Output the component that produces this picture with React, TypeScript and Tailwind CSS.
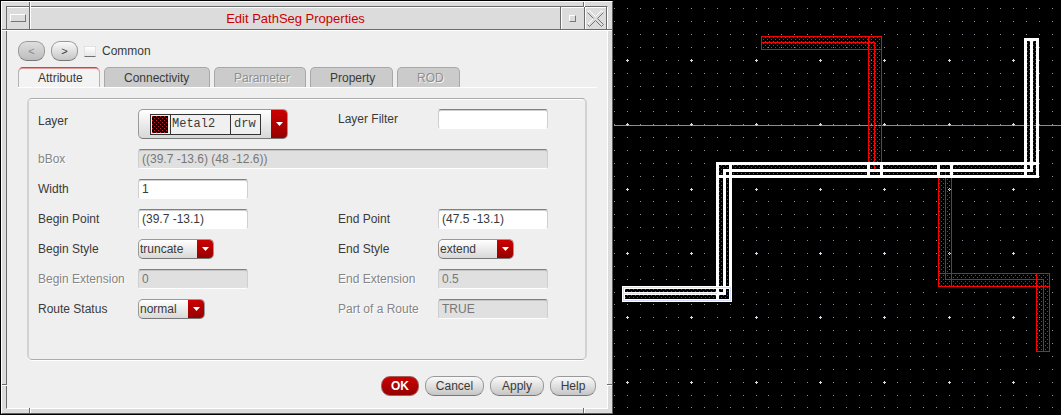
import type { ReactNode } from 'react';

const GRID = 12.87;
const ORIGIN_X = 14.4;
const ORIGIN_Y = 60.4;

function buildGrid() {
  let dots = '';
  let crosses = '';
  for (let i = -1; i < 160; i++) {
    for (let j = -4; j < 90; j++) {
      const x = Math.floor(ORIGIN_X + i * GRID);
      const y = Math.floor(ORIGIN_Y + j * GRID);
      if (i % 5 === 0 && j % 5 === 0) {
        crosses += `M${x - 1} ${y}h3v1h-3zM${x} ${y - 1}h1v3h-1z`;
      } else {
        dots += `M${x} ${y}h1v1h-1z`;
      }
    }
  }
  return { dots, crosses };
}

const grid = buildGrid();

function LayoutCanvas() {
  return (
    <section aria-label="Layout canvas" className="relative min-w-0 overflow-hidden bg-black">
      <svg className="absolute inset-0 h-full w-full" shapeRendering="crispEdges" aria-hidden="true">
        <defs>
          <pattern id="stipple" width="4" height="4" patternUnits="userSpaceOnUse">
            <path d="M1 1h1v1h-1zM3 3h1v1h-1z" fill="#d01c24" />
          </pattern>
        </defs>
        <path d={grid.dots} fill="#8c8c9e" />
        <rect x="1" y="125" width="100%" height="1" fill="#8c8c9e" />
        <path d={grid.crosses} fill="#d6d6e4" />
        <g transform="translate(-613 0)">
          <g fill="url(#stipple)">
            <path d="M761 36H882V177H868V50H761z" />
            <path d="M938 163H952V273H1050V352H1036V287H938z" />
            <path d="M717 163H1025V39H1038V177H731V301H623V287H717z" />
          </g>
          <g fill="none" stroke="#ff0000">
            <path d="M761.5 36.5H881.5V49.5H761.5zM868.5 36.5H881.5V163.5H868.5zM761.5 42.5H874.5V169" />
            <path d="M938.5 177V286.5H1049.5V273.5H938.5M951.5 177V286.5M1036.5 273.5H1049.5V351.5H1036.5zM945.5 172V279.5H1043.5V351" />
          </g>
          <g fill="none" stroke="#ffffff" strokeWidth="3">
            <path d="M717.5 163.5H1037.5V176.5H717.5z" />
            <path d="M1025.5 39.5H1037.5V176.5H1025.5z" />
            <path d="M717.5 163.5H730.5V300.5H717.5z" />
            <path d="M623.5 287.5H730.5V300.5H623.5z" />
            <path d="M1031.5 39V170.5H724.5V293.5H623" />
            <path d="M868.5 163V177M881.5 163V177M938.5 163V177M951.5 163V177" />
          </g>
          <path d="M623.5 287.5H730.5V300.5H623.5zM624 293.5H717" fill="none" stroke="#d3dcf8" />
        </g>
      </svg>
    </section>
  );
}

function TitleBar() {
  return (
    <header className="flex h-[23px] border-b border-[#6b6b6b] bg-[#dcdcdc] shadow-[inset_0_1px_0_#fff]">
      <button type="button" aria-label="Window menu" className="flex w-[23px] items-center justify-center border-r border-[#6b6b6b]">
        <span className="h-2 w-4 border border-t-white border-r-[#777] border-b-[#777] border-l-white" />
      </button>
      <h1 className="flex-1 border-l border-white pt-px text-center text-[13px] leading-[22px] text-[#cc0000]">
        Edit PathSeg Properties
      </h1>
      <button type="button" aria-label="Maximize" className="flex w-6 items-center justify-center border-l border-[#6b6b6b] shadow-[inset_1px_1px_0_#fff]">
        <span className="h-[7px] w-[7px] border border-t-white border-r-[#777] border-b-[#777] border-l-white" />
      </button>
      <button type="button" aria-label="Close" className="flex w-[23px] items-center justify-center border-x border-[#6b6b6b] shadow-[inset_1px_1px_0_#fff]">
        <svg width="17" height="17" viewBox="0 0 17 17" fill="none" aria-hidden="true">
          <path d="M.5 2.5L2.5 .5L8.5 6.5L14.5 .5L16.5 2.5M.5 14.5L6.5 8.5" stroke="#ffffff" />
          <path d="M16.5 2.5L10.5 8.5L16.5 14.5L14.5 16.5L8.5 10.5L2.5 16.5L.5 14.5M.5 2.5L6.5 8.5" stroke="#777777" />
        </svg>
      </button>
    </header>
  );
}

function FrameNotches() {
  const dark = 'absolute bg-[#6b6b6b]';
  return (
    <div aria-hidden="true" className="pointer-events-none">
      <span className={`${dark} top-0 left-[27px] h-[5px] w-px shadow-[1px_0_0_#fff]`} />
      <span className={`${dark} top-0 right-7 h-[5px] w-px shadow-[1px_0_0_#fff]`} />
      <span className={`${dark} bottom-0 left-[27px] h-[5px] w-px shadow-[1px_0_0_#fff]`} />
      <span className={`${dark} right-7 bottom-0 h-[5px] w-px shadow-[1px_0_0_#fff]`} />
      <span className={`${dark} top-[27px] left-0 h-px w-[5px] shadow-[0_1px_0_#fff]`} />
      <span className={`${dark} top-[27px] right-0 h-px w-[5px] shadow-[0_1px_0_#fff]`} />
      <span className={`${dark} bottom-7 left-0 h-px w-[5px] shadow-[0_1px_0_#fff]`} />
      <span className={`${dark} right-0 bottom-7 h-px w-[5px] shadow-[0_1px_0_#fff]`} />
    </div>
  );
}

const pill =
  'h-5 rounded-[9px] border border-[#999] border-b-[#777] bg-linear-to-b leading-[18px]';
const pillNormal = 'from-[#fafafa] to-[#c6c6c6] text-[#3a3a3a]';

function Tab({ label, width, active, disabled }: { label: string; width: string; active?: boolean; disabled?: boolean }) {
  return (
    <button
      type="button"
      role="tab"
      aria-selected={!!active}
      disabled={disabled}
      className={`h-5 rounded-t-[5px] border border-b-0 pl-[19px] text-left text-[12px] ${width} ${
        active
          ? 'border-[#b4b4b4] border-t-[#c84848] bg-[#f3f3f3] leading-[18px] text-[#3a3a3a] shadow-[inset_0_1px_0_#e59a9a]'
          : disabled
            ? 'border-[#a8a8a8] bg-[#cbcbcb] leading-5 text-[#8e8e8e] [text-shadow:1px_1px_0_#f4f4f4]'
            : 'border-[#a8a8a8] bg-[#cbcbcb] leading-5 text-[#3a3a3a]'
      }`}
    >
      {label}
    </button>
  );
}

function Label({ htmlFor, disabled, children }: { htmlFor: string; disabled?: boolean; children: ReactNode }) {
  return (
    <label
      htmlFor={htmlFor}
      className={`text-[12px] leading-5 whitespace-nowrap ${
        disabled ? 'text-[#858585] [text-shadow:1px_1px_0_#fff]' : 'text-[#3a3a3a]'
      }`}
    >
      {children}
    </label>
  );
}

function TextField({ id, value, disabled, wide }: { id: string; value?: string; disabled?: boolean; wide?: boolean }) {
  return (
    <input
      id={id}
      type="text"
      defaultValue={value}
      disabled={disabled}
      className={`h-5 w-full rounded-[3px] border border-t-[#808080] px-[3px] text-[12px] ${wide ? 'col-span-3' : 'max-w-[110px]'} ${
        disabled
          ? 'border-x-[#cfcfcf] border-b-white bg-[#e0e0e0] text-[#777] shadow-[inset_0_1px_0_#c4c4c4]'
          : 'border-x-[#cfcfcf] border-b-white bg-white text-[#3a3a3a] shadow-[inset_0_1px_0_#d0d0d0]'
      }`}
    />
  );
}

function Arrow() {
  return (
    <span className="flex w-4 items-center justify-center bg-linear-to-b from-[#cc0000] to-[#960000]">
      <svg width="7" height="4" viewBox="0 0 7 4" aria-hidden="true">
        <path d="M0 0h7L3.5 4z" fill="#fff" />
      </svg>
    </span>
  );
}

function Select({ id, value, options, width }: { id: string; value: string; options: string[]; width: string }) {
  return (
    <div className={`relative h-5 ${width}`}>
      <select
        id={id}
        defaultValue={value}
        className="block h-5 w-full appearance-none rounded-[5px] border border-[#999] border-b-[#777] bg-linear-to-b from-white to-[#d8d8d8] pr-4 pl-px text-[12px] leading-[18px] text-[#3a3a3a]"
      >
        {options.map((o) => (
          <option key={o}>{o}</option>
        ))}
      </select>
      <span className="pointer-events-none absolute inset-y-px right-px flex overflow-hidden rounded-r">
        <Arrow />
      </span>
    </div>
  );
}

function LayerSelect() {
  return (
    <div className="relative flex h-[30px] w-[150px] overflow-hidden rounded-[5px] border border-[#999] border-b-[#777] bg-linear-to-b from-white to-[#d8d8d8]">
      <div aria-hidden="true" className="flex flex-1 items-center pl-[11px]">
        <div className="flex h-[21px] w-[111px] border border-[#333] bg-[#f0f0f0] font-['Liberation_Mono',monospace] text-[12px] leading-[19px] text-[#3a3a3a]">
          <svg className="h-[19px] w-5 shrink-0 border-r border-[#333]" shapeRendering="crispEdges">
            <defs>
              <pattern id="swatch-stipple" width="4" height="4" patternUnits="userSpaceOnUse">
                <path d="M1 1h1v1h-1zM3 3h1v1h-1z" fill="#d01c24" />
              </pattern>
            </defs>
            <rect x="1" y="1" width="16" height="17" fill="#000" />
            <rect x="1" y="1" width="16" height="17" fill="url(#swatch-stipple)" />
          </svg>
          <span className="w-[60px] border-r border-[#333] pl-px">Metal2</span>
          <span className="pl-[3px]">drw</span>
        </div>
      </div>
      <Arrow />
      <select id="layer" defaultValue="Metal2 drw" className="absolute inset-0 h-full w-full opacity-0">
        <option>Metal2 drw</option>
      </select>
    </div>
  );
}

function AttributeForm() {
  return (
    <div
      role="tabpanel"
      aria-label="Attribute"
      className="mx-5 mt-2.5 rounded-[5px] border-x-2 border-y border-x-[#d2d2d2] border-y-[#acacac] pt-2.5 pr-2 pb-10 pl-[9px] shadow-[inset_0_1px_0_#fff,0_1px_0_#fff]"
    >
      <div className="grid max-w-[510px] grid-cols-[100px_minmax(0,200px)_100px_minmax(0,110px)] gap-y-2.5">
        <div className="flex pt-0.5">
          <Label htmlFor="layer">Layer</Label>
        </div>
        <LayerSelect />
        <Label htmlFor="layer-filter">Layer Filter</Label>
        <TextField id="layer-filter" />

        <Label htmlFor="bbox" disabled>bBox</Label>
        <TextField id="bbox" value="((39.7 -13.6) (48 -12.6))" disabled wide />

        <Label htmlFor="width">Width</Label>
        <TextField id="width" value="1" />
        <span className="col-span-2" />

        <Label htmlFor="begin-point">Begin Point</Label>
        <TextField id="begin-point" value="(39.7 -13.1)" />
        <Label htmlFor="end-point">End Point</Label>
        <TextField id="end-point" value="(47.5 -13.1)" />

        <Label htmlFor="begin-style">Begin Style</Label>
        <Select id="begin-style" value="truncate" options={['truncate', 'extend']} width="w-[76px]" />
        <Label htmlFor="end-style">End Style</Label>
        <Select id="end-style" value="extend" options={['truncate', 'extend']} width="w-[76px]" />

        <Label htmlFor="begin-ext" disabled>Begin Extension</Label>
        <TextField id="begin-ext" value="0" disabled />
        <Label htmlFor="end-ext" disabled>End Extension</Label>
        <TextField id="end-ext" value="0.5" disabled />

        <Label htmlFor="route-status">Route Status</Label>
        <Select id="route-status" value="normal" options={['normal', 'fixed']} width="w-[67px]" />
        <Label htmlFor="part-of-route" disabled>Part of a Route</Label>
        <TextField id="part-of-route" value="TRUE" disabled />
      </div>
    </div>
  );
}

function Dialog() {
  return (
    <div className="self-start bg-black pt-px pb-px pl-px">
      <div className="relative border border-t-white border-r-[#606060] border-b-[#606060] border-l-white bg-[#dcdcdc] p-1">
        <FrameNotches />
        <div className="border border-t-[#6b6b6b] border-r-white border-b-white border-l-[#6b6b6b] bg-[#efefef]">
          <TitleBar />
          <div className="pt-[11px] pb-3 shadow-[inset_0_1px_0_#fff]">
            <div className="flex items-center gap-1.5 pl-[11px]">
              <button type="button" disabled aria-label="Previous" className={`${pill} w-[27px] from-[#dedede] to-[#bdbdbd] text-[11px] text-[#888]`}>
                &lt;
              </button>
              <button type="button" aria-label="Next" className={`${pill} ${pillNormal} w-[27px] text-[11px]`}>
                &gt;
              </button>
              <label className="flex items-center gap-1.5 text-[12px] leading-[18px] text-[#3a3a3a]">
                <input
                  type="checkbox"
                  className="h-[11px] w-3 appearance-none border border-[#e2e2e2] border-b-[#707070] bg-linear-to-b from-white to-[#e6e6e6] checked:bg-[#c00]"
                />
                Common
              </label>
            </div>
            <div role="tablist" className="mt-1.5 mr-2.5 ml-[11px] flex gap-1 border-b border-white">
              <Tab label="Attribute" width="w-[82px]" active />
              <Tab label="Connectivity" width="w-[106px]" />
              <Tab label="Parameter" width="w-[92px]" disabled />
              <Tab label="Property" width="w-[83px]" />
              <Tab label="ROD" width="w-[63px]" disabled />
            </div>
            <AttributeForm />
            <div className="mt-4 mr-[11px] flex justify-end gap-1.5">
              <button type="button" className="h-5 w-[38px] rounded-[9px] border border-[#a06060] bg-linear-to-b from-[#cc0000] to-[#960000] text-[12px] leading-[18px] font-bold text-white">
                OK
              </button>
              <button type="button" className={`${pill} ${pillNormal} w-[59px] text-[12px]`}>Cancel</button>
              <button type="button" className={`${pill} ${pillNormal} w-[54px] text-[12px]`}>Apply</button>
              <button type="button" className={`${pill} ${pillNormal} w-[46px] text-[12px]`}>Help</button>
            </div>
          </div>
        </div>
      </div>
    </div>
  );
}

export default function App() {
  return (
    <main className="grid min-h-screen grid-cols-[minmax(0,613px)_minmax(320px,1fr)] bg-black font-['Liberation_Sans',Arial,sans-serif]">
      <Dialog />
      <LayoutCanvas />
    </main>
  );
}
